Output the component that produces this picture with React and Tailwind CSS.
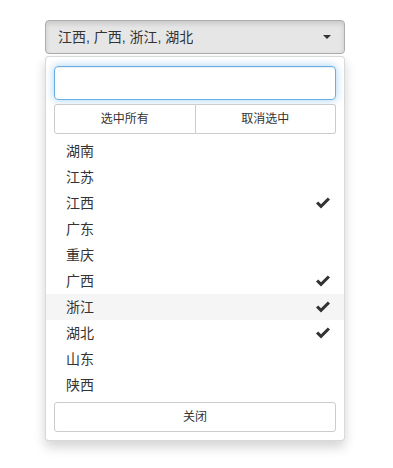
import React, { useState } from 'react';

const provinces = [
  { name: '湖南', selected: false },
  { name: '江苏', selected: false },
  { name: '江西', selected: true },
  { name: '广东', selected: false },
  { name: '重庆', selected: false },
  { name: '广西', selected: true },
  { name: '浙江', selected: true, hover: true },
  { name: '湖北', selected: true },
  { name: '山东', selected: false },
  { name: '陕西', selected: false },
];

const CheckMark = () => (
  <svg width="14" height="12" viewBox="0 0 14 12" className="fill-[#333]">
    <polygon points="0,6.6 2.2,4.4 5,7.2 11.8,0.4 14,2.6 5,11.6" />
  </svg>
);

const App = () => {
  const [items, setItems] = useState(provinces);
  const [query, setQuery] = useState('');

  const selectedText = items.filter((p) => p.selected).map((p) => p.name).join(', ');

  const toggle = (name) =>
    setItems((prev) => prev.map((p) => (p.name === name ? { ...p, selected: !p.selected } : p)));

  return (
    <div
      className="w-[393px] h-[468px] bg-white text-[#333] text-[14px] leading-[20px]"
      style={{ fontFamily: '"Liberation Sans", "Noto Sans CJK SC", sans-serif' }}
    >
      <div className="pt-[20px] pl-[45px] w-[345px]">
        {/* toggle button */}
        <button
          type="button"
          className="w-[300px] h-[34px] flex items-center justify-between pl-[12px] pr-[12px] bg-[#e6e6e6] border border-[#adadad] rounded-[4px] shadow-[inset_0_3px_5px_rgba(0,0,0,0.125)] text-left"
        >
          <span className="truncate">{selectedText}</span>
          <span className="w-0 h-0 border-t-[4px] border-t-[#333] border-x-[4px] border-x-transparent mr-[1px]" />
        </button>

        {/* dropdown menu */}
        <div className="mt-[2px] w-[300px] bg-white border border-[rgba(0,0,0,0.15)] rounded-[4px] shadow-[0_6px_12px_rgba(0,0,0,0.175)] py-[5px]">
          <div className="px-[8px] pt-[4px]">
            <input
              type="text"
              value={query}
              onChange={(e) => setQuery(e.target.value)}
              className="w-full h-[34px] px-[12px] border border-[#66afe9] rounded-[4px] outline-none shadow-[inset_0_1px_1px_rgba(0,0,0,0.075),0_0_8px_rgba(102,175,233,0.6)]"
            />
          </div>

          <div className="px-[8px] pt-[4px] pb-[4px]">
            <div className="flex h-[30px] text-[12px] leading-[18px]">
              <button
                type="button"
                onClick={() => setItems((prev) => prev.map((p) => ({ ...p, selected: true })))}
                className="flex-1 bg-white border border-[#ccc] rounded-l-[3px]"
              >
                选中所有
              </button>
              <button
                type="button"
                onClick={() => setItems((prev) => prev.map((p) => ({ ...p, selected: false })))}
                className="flex-1 bg-white border border-[#ccc] border-l-0 rounded-r-[3px]"
              >
                取消选中
              </button>
            </div>
          </div>

          <ul>
            {items
              .filter((p) => p.name.includes(query))
              .map((p) => (
                <li
                  key={p.name}
                  onClick={() => toggle(p.name)}
                  className={`h-[26px] flex items-center justify-between pl-[20px] pr-[14px] cursor-pointer ${
                    p.hover ? 'bg-[#f5f5f5]' : ''
                  }`}
                >
                  <span>{p.name}</span>
                  {p.selected && <CheckMark />}
                </li>
              ))}
          </ul>

          <div className="px-[8px] pt-[4px] pb-[3px]">
            <button
              type="button"
              className="w-full h-[30px] bg-white border border-[#ccc] rounded-[3px] text-[12px] leading-[18px]"
            >
              关闭
            </button>
          </div>
        </div>
      </div>
    </div>
  );
};

export default App;
